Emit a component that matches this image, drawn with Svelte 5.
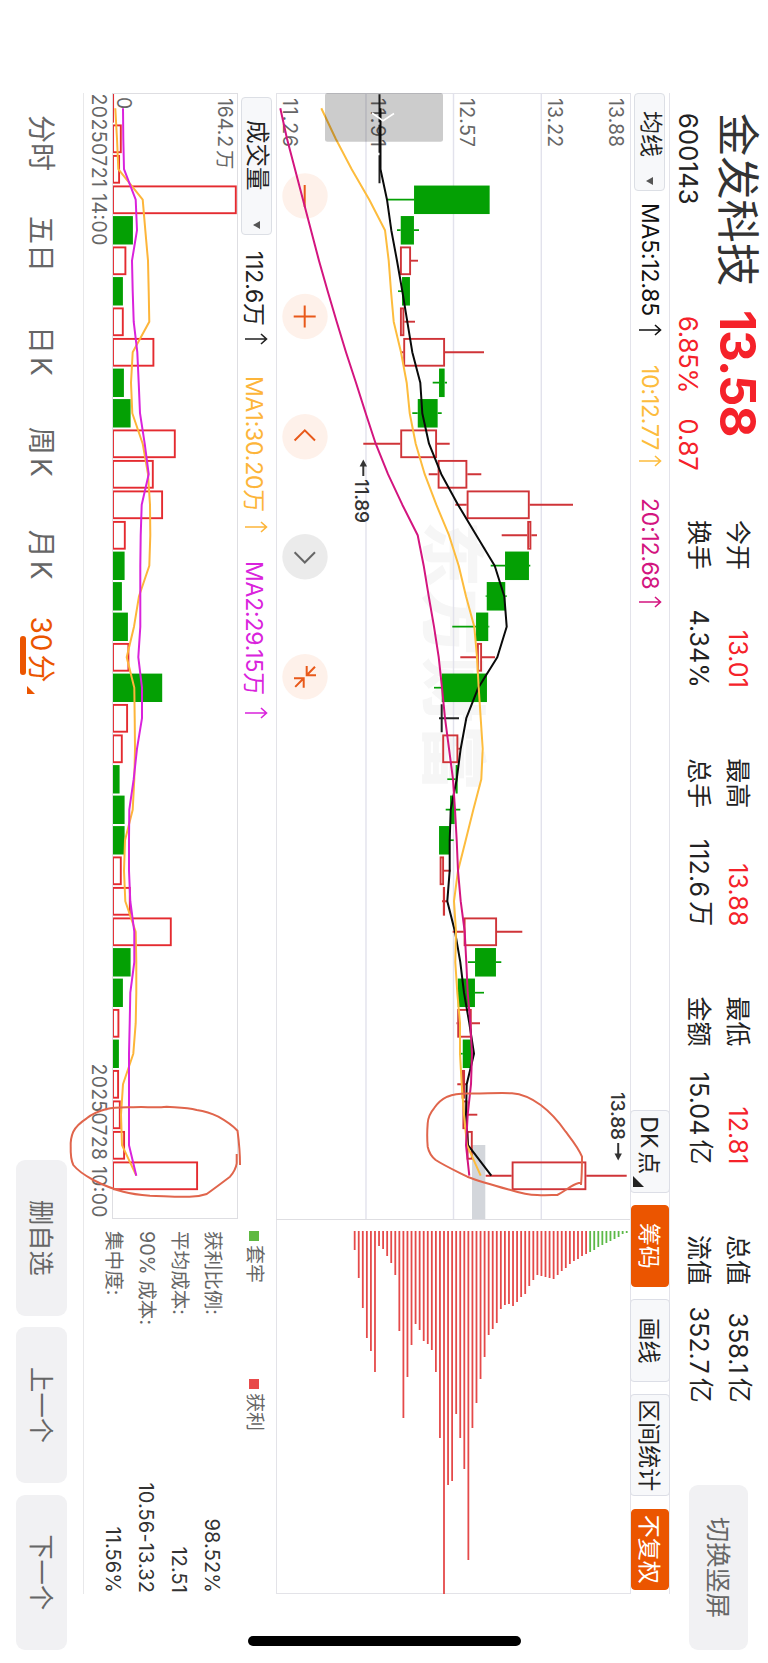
<script lang="ts">
	type Kind = 'up' | 'down' | 'flat';
	type Candle = [kind: Kind, low: number, bottom: number, top: number, high: number, volume: number, volKind?: Kind];

	// [kind, low, body bottom, body top, high, volume, volume colour], levels counted from the bottom edge of the screen
	const candles: Candle[] = [
		['flat', 379.5, 379.5, 379.5, 379.5, 2],
		['flat', 379.5, 379.5, 379.5, 379.5, 9.7],
		['flat', 379.5, 379.5, 379.5, 379.5, 8],
		['down', 387, 414, 489.7, 489.7, 124.7, 'up'],
		['down', 397, 400.7, 414, 419, 21],
		['up', 400, 400, 411, 418, 14.3],
		['down', 398, 402, 410, 410, 11],
		['up', 400, 400, 404.3, 415, 11.7],
		['up', 400.7, 403.3, 445, 484, 42.3],
		['down', 432.7, 439, 444.7, 447, 12],
		['down', 412.3, 417.7, 437.7, 441.7, 18.7],
		['up', 363.3, 400.3, 437, 449.7, 63.7],
		['up', 428.7, 437.7, 467.3, 481.3, 41.7],
		['up', 455.3, 466.7, 529.7, 573, 51],
		['up', 501.7, 527.3, 531.3, 537, 13.7],
		['down', 490.7, 505, 529, 530.3, 12.7],
		['down', 485.7, 486.7, 505.3, 506.7, 10],
		['down', 452.3, 476, 488.3, 489.3, 16],
		['up', 460.3, 477, 482, 495, 17.3],
		['down', 434, 441.7, 487, 487, 50.3],
		['flat', 439, 441.7, 441.7, 459, 16],
		['up', 442.3, 442.3, 458.3, 460.7, 10.7],
		['down', 447.3, 455.7, 457.7, 457.7, 7.7],
		['down', 445.7, 450, 454.7, 460.3, 12.7],
		['down', 439, 439, 449.3, 453.7, 12.7],
		['up', 439.7, 439.7, 444, 450.7, 9.7],
		['up', 442, 443.7, 445, 447, 18.7],
		['up', 452.7, 463.7, 497, 522.3, 59.7],
		['down', 468, 475, 496, 501.3, 18.7],
		['down', 457.7, 457.7, 475, 484, 11],
		['up', 456.5, 457.3, 471.7, 480, 7.3],
		['down', 459, 462.7, 471.3, 471.3, 7],
		['up', 457.3, 461.7, 465, 467, 7],
		['up', 462.5, 462.5, 467.5, 477.3, 8.7],
		['up', 466.7, 466.7, 472.7, 472.7, 13],
		['up', 485.7, 511.7, 586.3, 626.7, 86]
	];

	const ma5 = [380.5, 380.5, 380.5, 387, 391.3, 397, 402.3, 407.3, 412.3, 420.3, 422.3, 429, 441.3, 458, 476.3, 494.7, 504.3, 506.7, 497.3, 478.3, 466.3, 460.7, 456.7, 450.7, 449.7, 449.7, 447.3, 455, 460.3, 464, 469.3, 474, 466.7, 466, 468, 491.3];
	const ma10 = [321.3, 335.7, 351.7, 369.3, 385, 388.7, 391, 393.7, 401, 406.7, 409.7, 415.7, 424.7, 436.3, 449, 458.7, 466, 474.3, 477, 478.7, 480.7, 482.7, 481.3, 473.3, 465.7, 458, 454, 456, 455.3, 457.3, 460, 460, 461.7, 464, 467, 480.7];
	const ma20 = [280.3, 287, 295, 303, 311, 319, 327.7, 336.7, 346, 356, 365.7, 375.7, 388, 402.3, 417.7, 423.7, 428.7, 434, 438.7, 442, 445, 449, 453, 455, 456.7, 458, 460.7, 464.7, 466.3, 467.7, 470.3, 472, 471, 467.7, 466, 469.3];
	const volMa1 = [115.3, 117, 118.3, 142.7, 145.3, 148, 148.7, 149.3, 132.7, 131, 132.3, 142.7, 148, 150, 150.3, 149.3, 139, 134, 126.7, 134.3, 134.7, 135, 134.3, 132.7, 125, 124, 125.3, 135.7, 136.3, 136.3, 135.7, 133.3, 123, 121, 122, 136.3];
	const volMa2 = [123, 123.3, 124, 135.7, 137, 132, 132.7, 133.7, 137.3, 138.7, 140, 144.7, 148.7, 141.7, 140.7, 140.3, 140.3, 140.3, 138.3, 142, 142, 137, 133.7, 129.3, 129, 129, 130.3, 134.3, 134.3, 130.3, 129.7, 129, 129, 129, 129, 136.3];

	// chip distribution, highest price first
	const trapped = 10;
	const chips = [
		2, 3, 6, 8, 10, 12, 14, 16, 19, 21, 23, 25, 28, 30, 33, 37, 40, 44, 48, 47, 46, 45, 44, 49, 55, 63, 66, 71, 75, 73, 74, 78,
		92, 98, 104, 126, 148, 172, 197, 329, 238, 207, 183, 250, 254, 363, 207, 141, 119, 113, 110, 99, 93, 114, 146, 187, 100,
		44, 32, 25, 18, 15, 141, 120, 107, 77, 47, 19
	];

	const prices = [
		{ text: '13.88', y: 159 },
		{ text: '13.22', y: 219.7 },
		{ text: '12.57', y: 308.5 },
		{ text: '11.91', y: 397 },
		{ text: '11.26', y: 485 }
	];

	const stats = [
		{ label: '今开', value: '13.01', red: true },
		{ label: '最高', value: '13.88', red: true },
		{ label: '最低', value: '12.81', red: true },
		{ label: '总值', value: '358.1', unit: '亿' },
		{ label: '换手', value: '4.34%' },
		{ label: '总手', value: '112.6', unit: '万' },
		{ label: '金额', value: '15.04', unit: '亿' },
		{ label: '流值', value: '352.7', unit: '亿' }
	];

	const costs = [
		{ label: '获利比例:', value: '98.52%' },
		{ label: '平均成本:', value: '12.51' },
		{ label: '90% 成本:', value: '10.56-13.32' },
		{ label: '集中度:', value: '11.56%' }
	];

	const periods = [['分时'], ['五日'], ['日', 'K'], ['周', 'K'], ['月', 'K'], ['30', '分']];
	let active = $state(5);

	const cx = (i: number) => 108.2 + i * 30.5;
	const y = (level: number) => 768 - level;
	const line = (levels: number[]) => levels.map((v, i) => `${cx(i).toFixed(1)},${y(v).toFixed(1)}`).join(' ');
</script>

{#snippet arrow()}
	<svg class="arrow" width="12" height="24" viewBox="0 0 12 24">
		<path d="M6 23V1.5M1 7L6 1.5L11 7" fill="none" stroke="currentColor" stroke-width="1.6" />
	</svg>
{/snippet}

<div class="phone">
	<main class="stage">
		<header class="header">
			<div class="quote">
				<h1 class="quote__name">金发科技</h1>
				<span class="quote__price">13.58</span>
				<span class="quote__code">600143</span>
				<span class="quote__change"><span>6.85%</span><span>0.87</span></span>
			</div>
			<div class="stats">
				{#each stats as s}
					<div class="stats__cell">
						<span class="stats__label">{s.label}</span>
						<span class="stats__value" class:stats__value--red={s.red}>
							{s.value}{#if s.unit}<span class="stats__unit">{s.unit}</span>{/if}
						</span>
					</div>
				{/each}
			</div>
			<button class="gray-btn gray-btn--rotate">切换竖屏</button>
		</header>

		<div class="toolbar">
			<button class="select select--ma">均线<i class="caret"></i></button>
			<span class="legend legend--ma5">MA5:12.85{@render arrow()}</span>
			<span class="legend legend--ma10">10:12.77{@render arrow()}</span>
			<span class="legend legend--ma20">20:12.68{@render arrow()}</span>
			<div class="tools">
				<button class="tool tool--dk">DK<span>点</span><i class="tool__corner"></i></button>
				<button class="tool tool--on">筹码</button>
				<button class="tool">画线</button>
				<button class="tool tool--wide">区间统计</button>
				<button class="tool tool--on">不复权</button>
			</div>
		</div>

		<div class="row row--main">
			<svg class="kline" width="1126" height="354" viewBox="93 138 1126 354">
				<text class="watermark" x="521" y="339" textLength="270">东方财富</text>
				{#each [226.7, 314.5, 402] as gy}
					<line class="grid" x1="93" x2="1219" y1={gy} y2={gy} />
				{/each}
				<rect x="1145" y="282.7" width="74" height="13.3" fill="#d3d6db" />

				{#each prices as p}
					<text class="axis" x="98" y={p.y} textLength="49">{p.text}</text>
				{/each}

				<circle class="knob" cx="196" cy="463" r="22.7" />
				<circle class="knob" cx="316.5" cy="463" r="22.7" />
				<circle class="knob" cx="436.7" cy="463" r="22.7" />
				<circle class="knob knob--gray" cx="556.7" cy="463" r="22.7" />
				<circle class="knob" cx="676.7" cy="463" r="22.7" />
				<g class="knob-icon">
					<path d="M185 463.3H207" />
					<path d="M305.5 463.3H327.5M316.4 452.3V474.3" />
					<path d="M440.5 453L430.3 463.2L440.5 473.4" />
					<path class="knob-icon--gray" d="M552.3 453L562.5 463.2L552.3 473.4" />
					<path d="M666 461.3H675.3V452M675.3 461.3L666.7 453M687.7 464.3H678.3V474M678.3 464.3L686.9 472.8" />
				</g>

				{#each candles as [kind, low, bottom, top, high], i}
					<g class={kind}>
						{#if top === bottom}
							<path d="M{cx(i) - 14} {y(top)}h28M{cx(i)} {y(high)}V{y(low)}" />
						{:else}
							<path d="M{cx(i)} {y(high)}V{y(top)}M{cx(i)} {y(bottom)}V{y(low)}" />
							<rect
								x={cx(i) - 13.3}
								y={y(top) + 0.9}
								width="26.8"
								height={Math.max(top - bottom - 1.8, 0.3)}
							/>
						{/if}
					</g>
				{/each}

				<polyline class="ma" stroke="#0a0a0a" points={line(ma5)} />
				<polyline class="ma" stroke="#fdbc3d" points={line(ma10)} />
				<polyline class="ma" stroke="#d3157f" points={line(ma20)} />

				<g class="mark">
					<text x="479" y="412.7" textLength="44">11.89</text>
					<path d="M463 404.7H476" />
					<path class="mark__head" d="M459.5 404.7L466.5 401V408.4Z" />
					<text x="1092" y="157" textLength="48">13.88</text>
					<path d="M1143 149.8H1157" />
					<path class="mark__head" d="M1160.5 149.8L1153.5 146.1V153.5Z" />
				</g>

				<rect x="93" y="325" width="48.7" height="118" rx="2.5" fill="#000" fill-opacity="0.2" />
				<path d="M113 396L120.7 385L113.5 374" fill="none" stroke="#fff" stroke-width="1.6" />
			</svg>
			<svg class="chips" width="374" height="354" viewBox="1220 138 374 354">
				{#each chips as len, i}
					<line
						x1="1231"
						x2={1231 + len}
						y1={141.3 + i * 4.06}
						y2={141.3 + i * 4.06}
						stroke={i < trapped ? '#5cb947' : '#e54a4a'}
						stroke-width="1.8"
					/>
				{/each}
			</svg>
		</div>

		<div class="row row--volume">
			<div class="volume">
				<div class="volume__bar">
					<button class="select select--vol">成交量<i class="caret"></i></button>
					<span class="legend legend--vol">112.6万{@render arrow()}</span>
					<span class="legend legend--vol1">MA1:30.20万{@render arrow()}</span>
					<span class="legend legend--vol2">MA2:29.15万{@render arrow()}</span>
				</div>
				<svg class="volume__chart" width="1126" height="126" viewBox="93 530 1126 126">
					{#each candles as [kind, , , , , volume, volKind], i}
						<rect
							class={(volKind ?? kind) === 'down' ? 'vol-down' : 'vol-up'}
							x={cx(i) - 13.3}
							y={656 - volume + 0.9}
							width="26.8"
							height={Math.max(volume - 1.9, 0.4)}
						/>
					{/each}
					<text class="axis" x="98" y="550.5">
						<tspan textLength="49">164.2</tspan><tspan dx="3">万</tspan>
					</text>
					<text class="axis" x="97" y="651">0</text>
					<polyline class="ma" stroke="#fdb53a" points={line(volMa1)} />
					<polyline class="ma" stroke="#d923dc" points={line(volMa2)} />
				</svg>
				<svg class="volume__dates" width="1126" height="28" viewBox="93 656 1126 28">
					<text class="axis" x="93.5" y="676.3" textLength="152">20250721 14:00</text>
					<text class="axis" x="1063.5" y="676.3" textLength="154">20250728 10:00</text>
				</svg>
			</div>
			<aside class="cost">
				<div class="cost__legend">
					<span><i class="dot dot--green"></i><em>套牢</em></span>
					<span><i class="dot dot--red"></i><em>获利</em></span>
				</div>
				{#each costs as c}
					<div class="cost__row">
						<span>{c.label}</span>
						<b>{c.value}</b>
					</div>
				{/each}
			</aside>
		</div>

		<footer class="footer">
			<nav class="periods">
				{#each periods as parts, i}
					<button class="period period--{i}" class:period--active={i === active} onclick={() => (active = i)}>
						{#each parts as part}<span>{part}</span>{/each}
					</button>
				{/each}
			</nav>
			<div class="footer__actions">
				<button class="gray-btn">删自选</button>
				<button class="gray-btn">上一个</button>
				<button class="gray-btn">下一个</button>
			</div>
		</footer>

		<svg class="sketch" width="1663" height="768" viewBox="0 0 1663 768">
			<path d="M1185 187C1174 186 1163 186 1156.7 186C1147 190 1140 196 1131.7 202.3C1122 209 1112 218 1105 227.3C1098 237 1094 246 1093.3 256C1092.5 271 1094 286 1093.5 301C1093.5 309 1094 314 1096.7 320.7C1100 328 1104 331 1108.3 334C1113 338 1118 340 1123.3 340.3C1132 341 1139 341 1146.7 340.3C1153 339 1157 336 1160 332.3C1166 323 1171 312 1176.7 300.7C1182 287 1186 272 1190 257.3C1193 248 1195 239 1195 230.7C1195.5 223 1195 216 1195 210.7C1192 205 1189 201 1186.7 197.3C1184 193 1182.5 190 1182.7 186.7" />
			<path d="M1165 528C1153 528 1142 529 1130.7 530.5C1126 535 1121 542 1116.7 549.7C1113 557 1111 564 1110 571.3C1107 582 1107.5 592 1106.7 601.3C1108 613 1106.5 624 1107.3 634.7C1107.5 644 1107 653 1109 661.3C1111 669 1114 676 1118.3 681.3C1122 687 1126 692 1131.7 694.7C1137 697 1142 697.5 1146.7 697.3C1154 697.5 1160 697 1165 694.7C1171 690 1176 682 1180 674.7C1185 665 1189 655 1191.7 644.7C1194 636 1195 627 1195.7 618C1196 605 1197 593 1196.7 581.3C1197 574 1196 567 1194 561.3C1188 553 1182 545 1176.7 538C1172 534 1168 532 1163.3 531.3H1154" />
		</svg>
		<div class="home-bar"></div>
	</main>
</div>

<style>
	:global(body) {
		background: #fff;
	}

	.phone {
		width: 768px;
		height: 1663px;
		overflow: hidden;
		background: #fff;
	}

	.stage {
		position: relative;
		display: flex;
		flex-direction: column;
		width: 1663px;
		height: 768px;
		transform: translateX(768px) rotate(90deg);
		transform-origin: 0 0;
		font-family: Inter, 'Noto Sans CJK SC', sans-serif;
		color: #222;
		white-space: nowrap;
	}

	button {
		font: inherit;
		color: inherit;
		border: none;
		padding: 0;
		cursor: pointer;
	}

	/* ── Header ── */
	.header {
		display: flex;
		flex: none;
		height: 98px;
		box-sizing: border-box;
		padding-left: 113px;
	}

	.quote {
		display: grid;
		grid-template-columns: 197px 210px;
		grid-template-rows: 60px 38px;
		align-items: center;
		width: 407px;
	}

	.quote__name {
		margin: 0;
		font-size: 43.3px;
		line-height: 60px;
		font-weight: 400;
		color: #333;
	}

	.quote__price {
		font-size: 49px;
		font-weight: 700;
		letter-spacing: -0.9px;
		color: #f5222a;
	}

	.quote__code,
	.quote__change {
		font-size: 25.5px;
		letter-spacing: 0.2px;
	}

	.quote__change {
		display: flex;
		gap: 25px;
		padding-left: 6px;
		letter-spacing: -0.1px;
		color: #f5222a;
	}

	.stats {
		display: grid;
		grid-template-columns: repeat(4, 168px);
		grid-template-rows: 39px 39px;
		column-gap: 70.3px;
		padding-top: 10.5px;
	}

	.stats__cell {
		display: flex;
		align-items: center;
		justify-content: space-between;
		font-size: 25px;
	}

	.stats__label {
		padding-bottom: 5px;
	}

	.stats__value {
		letter-spacing: 0.1px;
	}

	.stats__value--red {
		color: #f5222a;
	}

	.stats__unit {
		margin-left: 4px;
		line-height: 1;
		vertical-align: 2px;
	}

	.gray-btn {
		width: 155.5px;
		height: 51px;
		padding-bottom: 4px;
		border-radius: 9px;
		background: #f1f1f3;
		color: #666;
		font-size: 25.3px;
	}

	.gray-btn--rotate {
		width: 165px;
		height: 59px;
		margin: 20px 13px 0 auto;
	}

	/* ── Toolbar ── */
	.toolbar {
		display: flex;
		flex: none;
		align-items: center;
		width: 1501px;
		height: 40px;
		margin-left: 93px;
		box-sizing: border-box;
		border-top: 1.3px solid #e3e3ea;
		border-bottom: 1.3px solid #e3e3ea;
	}

	.select {
		display: flex;
		align-items: center;
		justify-content: space-between;
		height: 31px;
		box-sizing: border-box;
		border: 1px solid #dcdfe5;
		border-radius: 4px;
		background: #f7f8fa;
		font-size: 23px;
		line-height: 26px;
	}

	.select--ma {
		width: 98px;
		padding: 0 5px 2px 17px;
	}

	.select--vol {
		width: 138px;
		margin-left: 4px;
		padding: 0 5px 2px 22px;
		font-size: 23.5px;
	}

	.caret {
		margin-top: 2px;
		border: 4.3px solid transparent;
		border-top: 7.7px solid #555;
		border-bottom: none;
	}

	.arrow {
		flex: none;
	}

	.legend {
		display: flex;
		align-items: center;
		justify-content: space-between;
		box-sizing: border-box;
		font-size: 23px;
		letter-spacing: -0.2px;
	}

	.legend--ma5 {
		width: 133px;
		margin-left: 12px;
		color: #111;
	}

	.legend--ma10 {
		width: 102px;
		margin-left: 29px;
		color: #fdbc3d;
	}

	.legend--ma20 {
		width: 110px;
		margin-left: 31px;
		color: #d3157f;
	}

	.tools {
		display: flex;
		align-items: center;
		gap: 12.3px;
		margin-left: auto;
		padding-right: 4px;
	}

	.tool {
		position: relative;
		width: 83px;
		height: 40px;
		padding-bottom: 3px;
		box-sizing: border-box;
		border: 1.3px solid #dcdee6;
		border-radius: 4px;
		background: #f7f8fa;
		font-size: 23px;
		color: #222;
	}

	.tool--dk {
		padding-right: 12px;
	}

	.tool--dk span {
		margin-left: 3px;
	}

	.tool__corner {
		position: absolute;
		right: 4.5px;
		bottom: 2px;
		border-left: 11px solid transparent;
		border-bottom: 11px solid #222;
	}

	.tool--wide {
		width: 102px;
	}

	.tool--on {
		width: 81.5px;
		height: 38px;
		border-color: #eb5500;
		background: #eb5500;
		color: #fff;
	}

	/* ── Charts ── */
	.row {
		display: flex;
		flex: none;
		width: 1501px;
		margin-left: 93px;
	}

	.row--main {
		height: 354px;
		box-sizing: border-box;
		border: solid #e3e3e8;
		border-width: 0 1.3px 1.3px 1.3px;
	}

	.kline,
	.chips,
	.volume svg {
		display: block;
		flex: none;
	}

	.row--main .kline {
		margin-left: -1px;
	}

	.row--main .chips {
		border-left: 1.3px solid #dedee2;
	}

	.grid {
		stroke: #e2e2ec;
		stroke-width: 1.4;
	}

	.watermark {
		font-size: 66px;
		font-weight: 900;
		fill: #f6f6f6;
	}

	.axis {
		font-size: 19.4px;
		fill: #666;
	}

	.up path,
	.down path,
	.flat path {
		fill: none;
		stroke-width: 1.8;
	}

	.up path,
	.up rect {
		fill: none;
		stroke: #cf3438;
		stroke-width: 1.9;
	}

	.down path,
	.down rect {
		stroke: #04a004;
		stroke-width: 1.7;
	}

	.down rect,
	.vol-down {
		fill: #04a004;
	}

	.flat path {
		stroke: #222;
		stroke-width: 2;
	}

	.vol-up {
		fill: none;
		stroke: #e42b30;
		stroke-width: 1.9;
	}

	.vol-down {
		stroke: #04a004;
		stroke-width: 1.6;
	}

	.ma {
		fill: none;
		stroke-width: 2;
		stroke-linejoin: round;
	}

	.knob {
		fill: #fef1ea;
	}

	.knob--gray {
		fill: #ebebeb;
	}

	.knob-icon {
		fill: none;
		stroke: #e8591a;
		stroke-width: 2;
	}

	.knob-icon--gray {
		stroke: #666;
	}

	.mark {
		font-size: 19px;
		font-weight: 500;
		fill: #333;
		stroke: none;
	}

	.mark path {
		stroke: #333;
		stroke-width: 2;
	}

	.mark .mark__head {
		stroke: none;
	}

	/* ── Volume ── */
	.row--volume {
		height: 193px;
		box-sizing: border-box;
		border-bottom: 1.3px solid #e8e8ea;
	}

	.volume {
		width: 1126px;
	}

	.volume__bar {
		display: flex;
		align-items: center;
		height: 38px;
		box-sizing: border-box;
		padding-top: 1px;
	}

	.volume__chart {
		outline: 1.3px solid #dedee2;
		outline-offset: -1.3px;
	}

	.legend--vol {
		width: 94px;
		margin-left: 16px;
	}

	.legend--vol1 {
		width: 157px;
		margin-left: 31px;
		color: #fdb53a;
	}

	.legend--vol2 {
		width: 158px;
		margin-left: 28px;
		color: #d923dc;
	}

	.cost {
		width: 375px;
		box-sizing: border-box;
		padding: 0 1px 0 12px;
		color: #666;
	}

	.cost__legend {
		display: flex;
		height: 47px;
		padding-top: 5px;
		box-sizing: border-box;
		font-size: 19px;
	}

	.cost__legend span {
		display: flex;
		align-items: center;
		gap: 4px;
		width: 148px;
		height: 34px;
	}

	.cost__legend em {
		padding-bottom: 5px;
		font-style: normal;
	}

	.dot {
		width: 10px;
		height: 10px;
	}

	.dot--green {
		background: #5fb942;
	}

	.dot--red {
		background: #e84a4a;
	}

	.cost__row {
		display: flex;
		align-items: center;
		justify-content: space-between;
		height: 33px;
		font-size: 19.6px;
	}

	.cost__row span {
		padding-bottom: 4px;
	}

	.cost__row b {
		font-size: 20px;
		font-weight: 400;
		letter-spacing: 0.1px;
		color: #333;
	}

	/* ── Footer ── */
	.footer {
		display: flex;
		flex: none;
		justify-content: space-between;
		height: 83px;
		padding: 16px 13px 0 115px;
		box-sizing: border-box;
	}

	.periods {
		display: flex;
		gap: 45px;
		height: 51px;
	}

	.period {
		position: relative;
		padding-bottom: 3px;
		background: none;
		font-size: 28px;
		color: #666;
	}

	.period span + span {
		margin-left: 3px;
	}

	.period--2 {
		margin-left: 9px;
	}

	.period--3 {
		margin-left: 6px;
	}

	.period--4 {
		margin-left: 8px;
	}

	.period--5 {
		margin-left: -8px;
	}

	.period--active {
		color: #eb5500;
	}

	.period--active::before {
		content: '';
		position: absolute;
		left: 19px;
		bottom: 4px;
		width: 39px;
		height: 5.6px;
		border-radius: 3px;
		background: #eb5500;
	}

	.period--active::after {
		content: '';
		position: absolute;
		right: -11px;
		bottom: 11px;
		border-left: 8.3px solid transparent;
		border-bottom: 8.3px solid #eb5500;
	}

	.footer__actions {
		display: flex;
		gap: 11.7px;
	}

	.sketch {
		position: absolute;
		inset: 0;
		fill: none;
		stroke: #e0654c;
		stroke-width: 2;
		pointer-events: none;
	}

	.home-bar {
		position: absolute;
		left: 1636px;
		top: 247px;
		width: 10px;
		height: 273px;
		border-radius: 5px;
		background: #000;
	}
</style>
